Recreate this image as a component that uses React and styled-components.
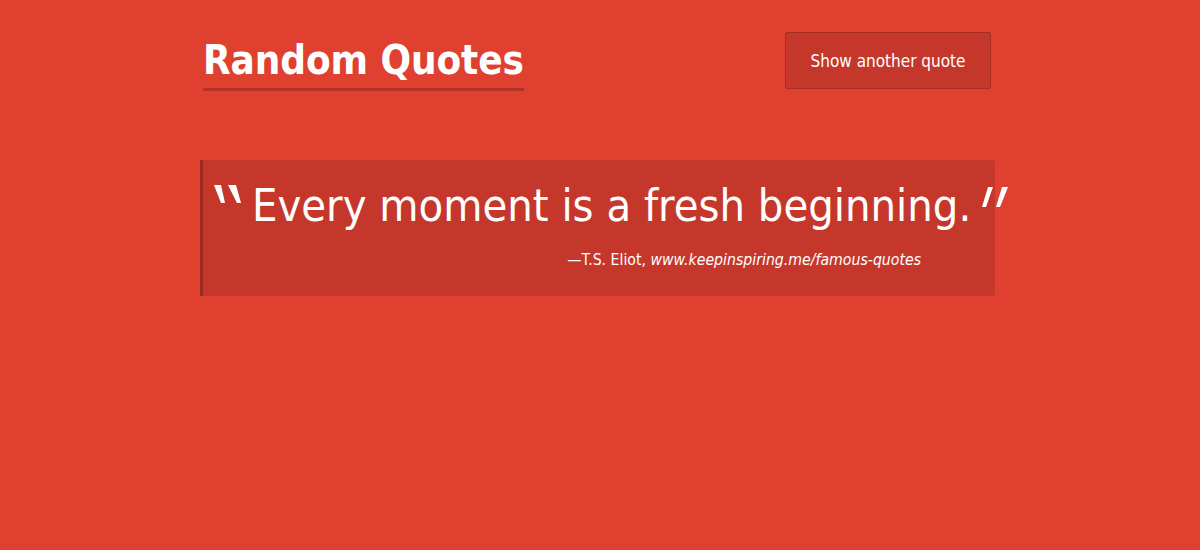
import React from 'react'
import styled, { createGlobalStyle } from 'styled-components'

const GlobalStyle = createGlobalStyle`
  html, body {
    margin: 0;
    padding: 0;
    background: #e0402f;
    font-family: 'DejaVu Sans Condensed', 'DejaVu Sans', sans-serif;
    color: #fff;
  }
`

const Page = styled.div`
  width: 800px;
  margin: 0 auto;
  padding-top: 32px;
  min-height: 550px;
  box-sizing: border-box;
`

const Header = styled.header`
  display: flex;
  justify-content: space-between;
  align-items: flex-start;
  padding-right: 9px;
`

const Title = styled.h1`
  margin: 0 0 0 3px;
  font-size: 40px;
  font-weight: bold;
  line-height: 56px;
  border-bottom: 3px solid #b13328;
  letter-spacing: -0.1px;
`

const Button = styled.button`
  width: 206px;
  height: 57px;
  background: #c5372b;
  border: 1px solid #a52d23;
  border-radius: 2px;
  color: #fff;
  font-family: inherit;
  font-size: 17px;
  cursor: pointer;
`

const Quote = styled.blockquote`
  margin: 69px 5px 0 0;
  padding: 16px 0 27px 0;
  background: #c6372b;
  border-left: 3px solid #9a2a20;
  border-radius: 0 3px 3px 0;
`

const Line = styled.p`
  margin: 0;
  display: flex;
  align-items: flex-start;
  white-space: nowrap;
  font-size: 44.8px;
  line-height: 60px;
`

const Mark = styled.svg`
  flex: none;
  fill: #fff;
  margin: ${p => (p.$open ? '8px 10px 0 10px' : '10px 0 0 10px')};
`

const Cite = styled.footer`
  margin-top: 14px;
  padding-right: 74px;
  text-align: right;
  font-size: 15.7px;
`

const OpenQuote = () => (
  <Mark $open width="29" height="20" viewBox="0 0 29 20">
    <polygon points="1,1 8,1 12,19 8,19" />
    <polygon points="15,1 23,1 28,19 24,19" />
  </Mark>
)

const CloseQuote = () => (
  <Mark width="28" height="22" viewBox="0 0 28 22">
    <polygon points="7,1 12,1 5,21 1,21" />
    <polygon points="21,1 27,1 19,21 15,21" />
  </Mark>
)

export default function App() {
  return (
    <>
      <GlobalStyle />
      <Page>
        <Header>
          <Title>Random Quotes</Title>
          <Button>Show another quote</Button>
        </Header>
        <Quote>
          <Line>
            <OpenQuote />
            Every moment is a fresh beginning.
            <CloseQuote />
          </Line>
          <Cite>
            —T.S. Eliot, <i>www.keepinspiring.me/famous-quotes</i>
          </Cite>
        </Quote>
      </Page>
    </>
  )
}
